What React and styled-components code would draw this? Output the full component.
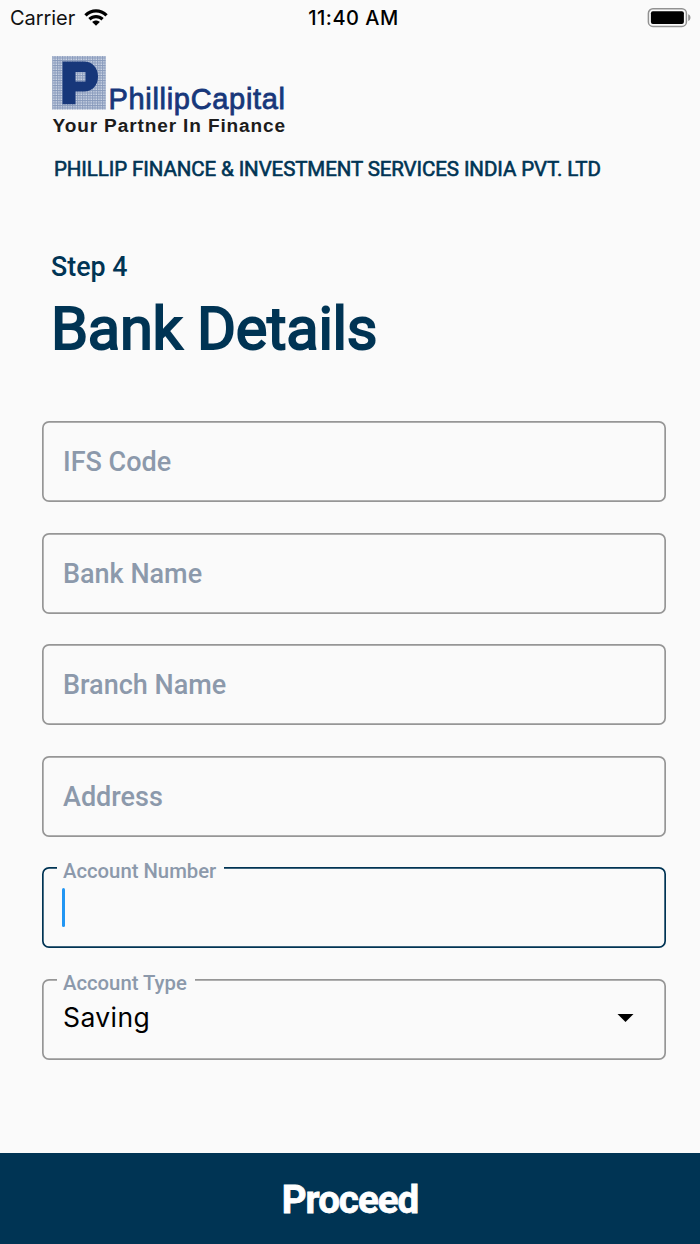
import React from "react";
import styled, { createGlobalStyle, ThemeProvider } from "styled-components";

const theme = {
  colors: {
    mainBG: "#fafafa",
    navy: "#003454",
    label: "#8c99ab",
    outline: "#969696",
    caret: "#2196f3",
    logoBlue: "#17377a"
  },
  fonts: {
    main: "Roboto, sans-serif",
    system: "Inter, sans-serif"
  }
};

const GlobalStyle = createGlobalStyle`
  body {
    margin: 0;
    background: #fafafa;
  }
  * {
    box-sizing: border-box;
  }
`;

const Screen = styled.div`
  width: 700px;
  height: 1244px;
  display: flex;
  flex-direction: column;
  overflow: hidden;
  background: ${props => props.theme.colors.mainBG};
  color: ${props => props.theme.colors.navy};
  font-family: ${props => props.theme.fonts.main};
`;

const StatusBar = styled.div`
  height: 36px;
  padding: 0 9px 0 10px;
  display: grid;
  grid-template-columns: 1fr auto 1fr;
  align-items: center;
  color: #111;
  font-family: ${props => props.theme.fonts.system};
  font-size: 20px;
  line-height: 36px;
`;

const Carrier = styled.div`
  display: flex;
  align-items: center;
  gap: 9px;
  letter-spacing: -0.05px;

  svg {
    margin-top: -2px;
  }
`;

const Clock = styled.div`
  padding-left: 6px;
  color: #000;
  font-weight: 500;
  letter-spacing: 0.5px;
`;

const BatterySlot = styled.div`
  display: flex;
  justify-content: flex-end;
`;

const Header = styled.header`
  padding: 19px 0 0 52px;
  display: flex;
  flex-direction: column;
  align-items: flex-start;
`;

const Company = styled.div`
  margin: 22px 0 0 2px;
  font-size: 20.5px;
  font-weight: 400;
  line-height: 24px;
  letter-spacing: -0.1px;
  white-space: nowrap;
  -webkit-text-stroke: 0.6px;
`;

const Step = styled.div`
  margin: 70px 0 0 -1px;
  font-size: 26.8px;
  font-weight: 500;
  line-height: 32px;
`;

const Title = styled.h1`
  margin: 10px 0 0 -1px;
  font-size: 59.5px;
  font-weight: 400;
  line-height: 72px;
  letter-spacing: -0.25px;
  white-space: nowrap;
  -webkit-text-stroke: 2px;
`;

const Form = styled.form`
  margin: 56px 34px 0 42.4px;
  display: flex;
  flex-direction: column;
  gap: 30.6px;
`;

const Field = styled.div`
  position: relative;
  height: 81px;
  padding: 0 32px 0 20.6px;
  display: flex;
  align-items: center;
  justify-content: space-between;
  border-radius: 7px;
  box-shadow: inset 0 0 0 1.7px ${props => (props.$focused ? props.theme.colors.navy : props.theme.colors.outline)};
`;

const Placeholder = styled.span`
  margin-top: 1px;
  color: ${props => props.theme.colors.label};
  font-size: 27px;
  font-weight: 500;
  line-height: 32px;
`;

// sits on the outline and cuts a gap in it
const FloatingLabel = styled.span`
  position: absolute;
  top: -8px;
  left: 14.6px;
  padding: 0 8px 0 6px;
  background: ${props => props.theme.colors.mainBG};
  color: ${props => props.theme.colors.label};
  font-size: 20.3px;
  font-weight: 500;
  line-height: 24px;
  white-space: nowrap;
`;

const Caret = styled.span`
  width: 3px;
  height: 39px;
  margin-left: -1px;
  border-radius: 2px;
  background: ${props => props.theme.colors.caret};
`;

const Value = styled.span`
  margin-bottom: 4px;
  color: #000;
  font-family: ${props => props.theme.fonts.system};
  font-size: 26.5px;
  line-height: 32px;
  letter-spacing: 0.4px;
`;

const Proceed = styled.button`
  height: 91.5px;
  margin-top: auto;
  padding: 3px 0 0;
  flex-shrink: 0;
  border: none;
  background: ${props => props.theme.colors.navy};
  color: #fff;
  font-family: ${props => props.theme.fonts.main};
  font-size: 38.5px;
  font-weight: 700;
  letter-spacing: -1px;
  -webkit-text-stroke: 0.8px;
`;

const WifiIcon = () => (
  <svg width="24" height="17" viewBox="0 0 24 17">
    <path d="M0.3 5.2C7 -1.4 17 -1.4 23.7 5.2L21.4 7.5C16.1 2.3 7.9 2.3 2.6 7.5Z" fill="#000" />
    <path d="M4.3 9.1C8.7 4.9 15.3 4.9 19.7 9.1L17.4 11.4C14.3 8.5 9.7 8.5 6.6 11.4Z" fill="#000" />
    <path d="M8.2 13C10.4 11 13.6 11 15.8 13L12 16.8Z" fill="#000" />
  </svg>
);

const BatteryIcon = () => (
  <svg width="44" height="20" viewBox="0 0 44 20">
    <rect x="1.4" y="0.8" width="38" height="17.6" rx="4.5" fill="none" stroke="#929292" strokeWidth="1.5" />
    <rect x="3.9" y="3.3" width="33" height="12.6" rx="2" fill="#000" />
    <path d="M41.2 6.3C44.2 7.3 44.2 12.1 41.2 13.1Z" fill="#929292" />
  </svg>
);

const Logo = () => (
  <svg width="236" height="80" viewBox="0 0 236 80">
    <defs>
      <pattern id="mesh" width="2.5" height="2.5" patternUnits="userSpaceOnUse">
        <rect width="2.5" height="2.5" fill="#d0d8e6" />
        <path d="M0 0.6H2.5M0.6 0V2.5" stroke="#8799bb" strokeWidth="1" />
      </pattern>
    </defs>
    <rect x="0.2" y="1" width="53.6" height="53.6" fill="url(#mesh)" />
    <path
      d="M10.5 6.5H32C40 6.5 46 12.5 46 21.5S40 36.5 32 36.5H23.5V49.3H10.5ZM23.5 17V26.5H33.5V17Z"
      fill={theme.colors.logoBlue}
      fillRule="evenodd"
    />
    <text
      x="56.5"
      y="54.4"
      textLength="176.5"
      fill={theme.colors.logoBlue}
      stroke={theme.colors.logoBlue}
      strokeWidth="0.8"
      fontFamily="Liberation Sans, Arial, sans-serif"
      fontSize="29"
    >
      PhillipCapital
    </text>
    <text
      x="0.5"
      y="76.6"
      textLength="233.5"
      lengthAdjust="spacingAndGlyphs"
      letterSpacing="0.8"
      fill="#1c1c1c"
      fontFamily="Liberation Sans, Arial, sans-serif"
      fontSize="17.5"
      fontWeight="700"
    >
      Your Partner In Finance
    </text>
  </svg>
);

const ArrowIcon = () => (
  <svg width="17" height="10" viewBox="0 0 17 10">
    <path d="M0.5 0H16.5L8.5 8Z" fill="#000" />
  </svg>
);

const placeholders = ["IFS Code", "Bank Name", "Branch Name", "Address"];

const App = () => (
  <ThemeProvider theme={theme}>
    <GlobalStyle />
    <Screen>
      <StatusBar>
        <Carrier>
          Carrier
          <WifiIcon />
        </Carrier>
        <Clock>11:40 AM</Clock>
        <BatterySlot>
          <BatteryIcon />
        </BatterySlot>
      </StatusBar>
      <Header>
        <Logo />
        <Company>PHILLIP FINANCE &amp; INVESTMENT SERVICES INDIA PVT. LTD</Company>
        <Step>Step 4</Step>
        <Title>Bank Details</Title>
      </Header>
      <Form>
        {placeholders.map(text => (
          <Field key={text}>
            <Placeholder>{text}</Placeholder>
          </Field>
        ))}
        <Field $focused>
          <FloatingLabel>Account Number</FloatingLabel>
          <Caret />
        </Field>
        <Field>
          <FloatingLabel>Account Type</FloatingLabel>
          <Value>Saving</Value>
          <ArrowIcon />
        </Field>
      </Form>
      <Proceed type="button">Proceed</Proceed>
    </Screen>
  </ThemeProvider>
);

export default App;
